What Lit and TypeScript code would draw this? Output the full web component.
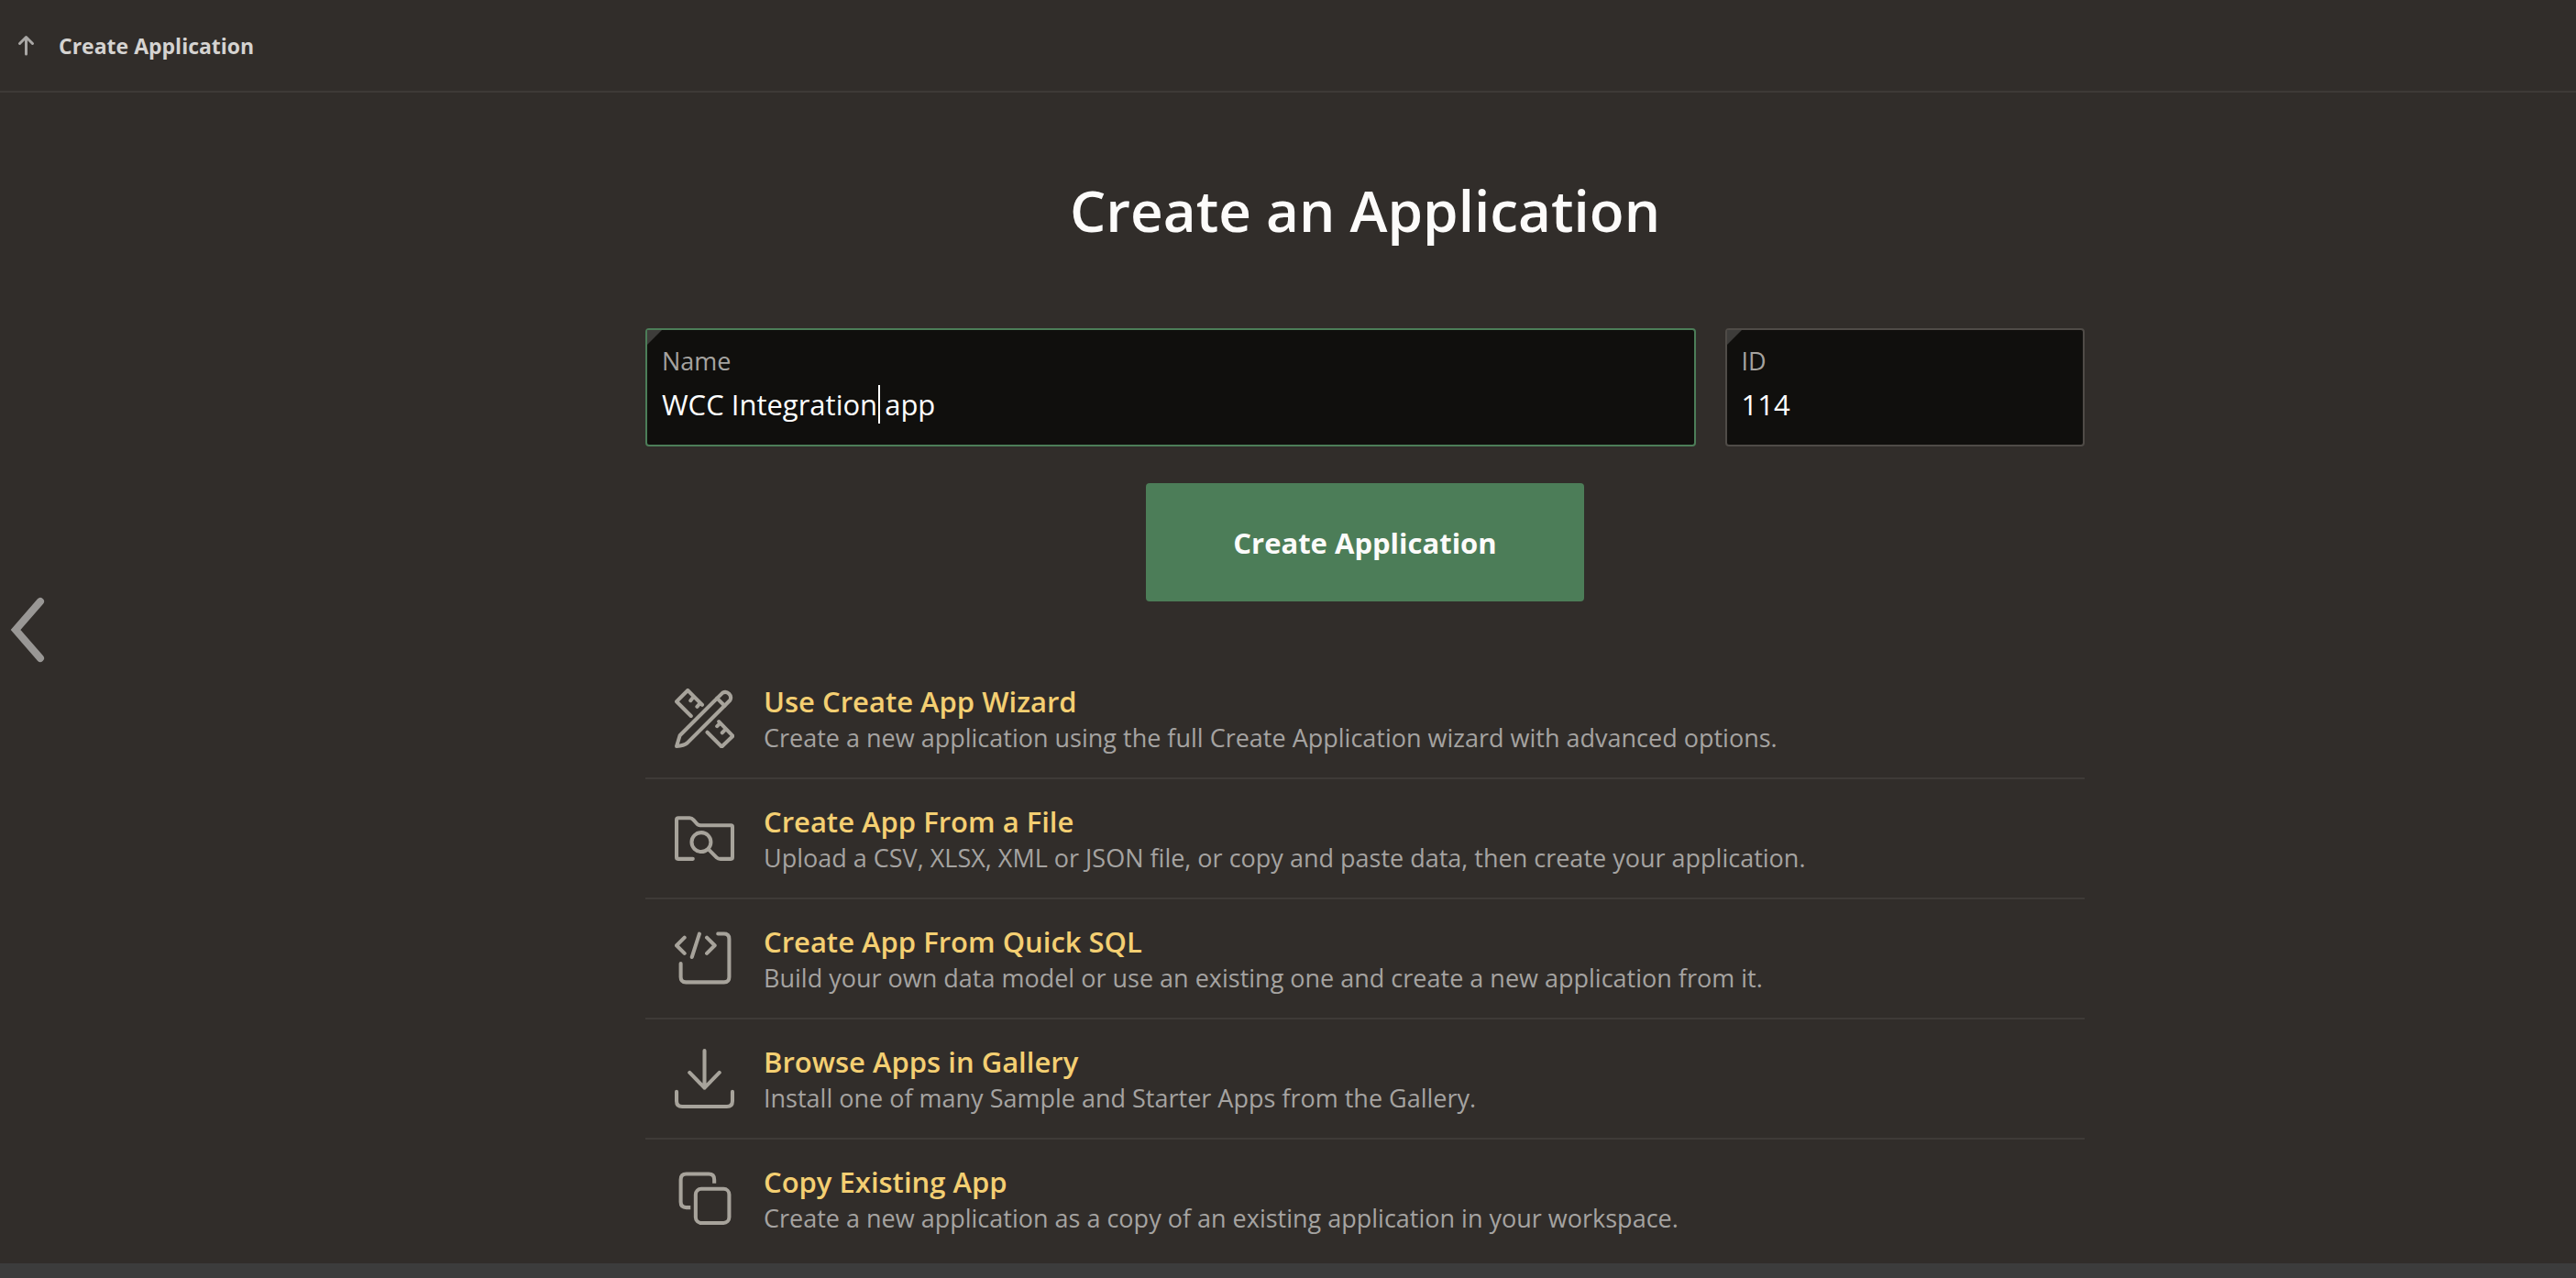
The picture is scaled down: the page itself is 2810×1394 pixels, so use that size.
import { LitElement, html, svg, css } from "lit";
import type { SVGTemplateResult } from "lit";
import { customElement, property, state } from "lit/decorators.js";
import { classMap } from "lit/directives/class-map.js";

interface CreateOption {
  title: string;
  description: string;
  icon: SVGTemplateResult;
}

const icons = {
  wizard: svg`
    <path d="M2 62 5.500 50.500 51.500 4.500A6 6 0 0 1 59.500 12.500L13.500 58.500Q10 61.500 2 62Z"/>
    <path d="M45.500 10.500 53.500 18.500"/>
    <path d="M17.500 29.500 2 14 14 2 29.500 17.500M20.500 8.500 17 13M27.500 15.500 24 19.500"/>
    <path d="M35 47 50.500 62.500 62.500 51 47.500 35.500M49 37 45.500 40.500M55 43.500 51 47.500"/>`,
  file: svg`
    <path d="M19.500 54H3.500Q2 54 2 52.500V12Q2 10 4 10H16Q18.500 10 20 12L24 16.500Q25.500 18 28 18H60.500Q62 18 62 19.500V52.500Q62 54 60.500 54H49Q46.500 54 45 52.500L36 43.500"/>
    <circle cx="28.500" cy="36" r="10.300"/>`,
  sql: svg`
    <path d="M10.500 9.500 2 18 10.500 26.500M26.500 5.500 18.500 30.500M34.500 9.500 43 18 34.500 26.500"/>
    <path d="M46.500 5.500H53Q58.500 5.500 58.500 11V52Q58.500 57.500 53 57.500H12Q6.500 57.500 6.500 52V37.500"/>`,
  gallery: svg`
    <path d="M32 2V42M16 25.500 32 42 48 25.500"/>
    <path d="M2 46V56Q2 62 8 62H56Q62 62 62 56V46"/>`,
  copy: svg`
    <path stroke-linecap="butt" d="M42.500 15.500V11.500Q42.500 5.500 36.500 5.500H12.500Q6.500 5.500 6.500 11.500V35.500Q6.500 41.500 12.500 41.500H17"/>
    <rect x="22.500" y="21.500" width="36" height="36.500" rx="6"/>`,
};

const options: CreateOption[] = [
  {
    title: "Use Create App Wizard",
    description: "Create a new application using the full Create Application wizard with advanced options.",
    icon: icons.wizard,
  },
  {
    title: "Create App From a File",
    description: "Upload a CSV, XLSX, XML or JSON file, or copy and paste data, then create your application.",
    icon: icons.file,
  },
  {
    title: "Create App From Quick SQL",
    description: "Build your own data model or use an existing one and create a new application from it.",
    icon: icons.sql,
  },
  {
    title: "Browse Apps in Gallery",
    description: "Install one of many Sample and Starter Apps from the Gallery.",
    icon: icons.gallery,
  },
  {
    title: "Copy Existing App",
    description: "Create a new application as a copy of an existing application in your workspace.",
    icon: icons.copy,
  },
];

@customElement("app-field")
export class AppField extends LitElement {
  @property() label = "";
  @property() value = "";
  @property({ type: Boolean }) active = false;

  static styles = css`
    :host {
      display: block;
      min-width: 0;
    }
    .field {
      position: relative;
      display: flex;
      flex-direction: column;
      gap: 7px;
      padding: 16px 16px 22px;
      border: 2px solid #4f4b47;
      border-radius: 4px;
      background: #100f0d;
    }
    .field.active {
      border-color: #4c7d58;
    }
    .required {
      position: absolute;
      top: 0;
      left: 0;
      border-top: 16px solid #3d3c3a;
      border-right: 16px solid transparent;
    }
    .label {
      color: #a5a3a0;
      font-size: 27px;
      line-height: 36px;
    }
    .input {
      width: 100%;
      height: 44px;
      padding: 0;
      border: 0;
      outline: 0;
      background: none;
      color: #fff;
      caret-color: transparent;
      font-family: inherit;
      font-size: 31px;
      line-height: 44px;
    }
    .caret {
      position: absolute;
      left: 252px;
      bottom: 23px;
      width: 2px;
      height: 42px;
      background: #fff;
    }
  `;

  render() {
    return html`
      <div class=${classMap({ field: true, active: this.active })}>
        <span class="required"></span>
        <label class="label" for="control">${this.label}</label>
        <input class="input" id="control" type="text" required .value=${this.value} />
        ${this.active ? html`<span class="caret"></span>` : null}
      </div>
    `;
  }
}

@customElement("app-root")
export class AppRoot extends LitElement {
  @state() private options = options;

  static styles = css`
    :host {
      display: flex;
      flex-direction: column;
      min-height: 100vh;
      background: #312d2a;
      color: #fcfbfa;
      font-family: "Open Sans", "Noto Sans", sans-serif;
    }
    svg {
      display: block;
      flex: none;
      fill: none;
      stroke: currentColor;
      stroke-linecap: round;
      stroke-linejoin: round;
    }
    .header {
      display: flex;
      align-items: center;
      gap: 26px;
      height: 99px;
      padding-left: 18px;
      border-bottom: 2px solid #3e3a37;
    }
    .up {
      color: #a9a7a5;
    }
    .crumb {
      color: #d5d3d1;
      font-size: 23px;
      font-weight: 700;
      line-height: 32px;
    }
    .main {
      display: grid;
      grid-template-columns: 168px minmax(0, 1fr);
      align-items: start;
    }
    .back {
      margin: 547px 0 0 7px;
      padding: 0;
      border: 0;
      background: none;
      color: #999795;
      justify-self: start;
    }
    .content {
      box-sizing: border-box;
      width: 100%;
      max-width: 1570px;
      margin: 0 auto;
      padding-top: 92px;
    }
    .title {
      margin: 0 0 93px;
      font-size: 62px;
      font-weight: 600;
      line-height: 72px;
      text-align: center;
    }
    .fields {
      display: grid;
      grid-template-columns: minmax(0, 1fr) 25%;
      gap: 32px;
    }
    .create {
      display: block;
      margin: 40px auto 63px;
      padding: 0 95px;
      height: 129px;
      border: 0;
      border-radius: 4px;
      background: #4c7d58;
      color: #fcfbfa;
      font-family: inherit;
      font-size: 31px;
      font-weight: 700;
    }
    .list {
      margin: 0;
      padding: 0;
      list-style: none;
    }
    .item + .item {
      border-top: 2px solid #3e3a37;
    }
    .option {
      display: flex;
      align-items: center;
      gap: 32px;
      height: 129px;
      padding-left: 32px;
      text-decoration: none;
    }
    .icon {
      color: #a7a39b;
    }
    .text {
      display: flex;
      flex-direction: column;
    }
    .name {
      color: #f4cf72;
      font-size: 31px;
      font-weight: 600;
      line-height: 42px;
    }
    .description {
      color: #a5a3a1;
      font-size: 27px;
      line-height: 38px;
    }
    .footer {
      height: 16px;
      margin-top: auto;
      background: #3c3c3c;
    }
  `;

  render() {
    return html`
      <header class="header">
        <a class="up" href="#up" aria-label="Up">
          <svg width="20" height="24" viewBox="0 0 20 24" stroke-width="3">
            <path d="M10.500 21V3M3.500 9.500 10.500 2.500 17.500 9.500" />
          </svg>
        </a>
        <span class="crumb">Create Application</span>
      </header>
      <main class="main">
        <button class="back" type="button" aria-label="Back">
          <svg width="48" height="80" viewBox="0 0 48 80" stroke-width="8">
            <path stroke-linejoin="miter" d="M37 8 10 39 37 70" />
          </svg>
        </button>
        <div class="content">
          <h1 class="title">Create an Application</h1>
          <div class="fields">
            <app-field label="Name" value="WCC Integration app" active></app-field>
            <app-field label="ID" value="114"></app-field>
          </div>
          <button class="create" type="button">Create Application</button>
          <ul class="list">
            ${this.options.map(
              (option) => html`
                <li class="item">
                  <a class="option" href="#create">
                    <svg class="icon" width="65" height="65" viewBox="0 0 64 64" stroke-width="4">
                      ${option.icon}
                    </svg>
                    <span class="text">
                      <span class="name">${option.title}</span>
                      <span class="description">${option.description}</span>
                    </span>
                  </a>
                </li>
              `
            )}
          </ul>
        </div>
      </main>
      <footer class="footer"></footer>
    `;
  }
}
